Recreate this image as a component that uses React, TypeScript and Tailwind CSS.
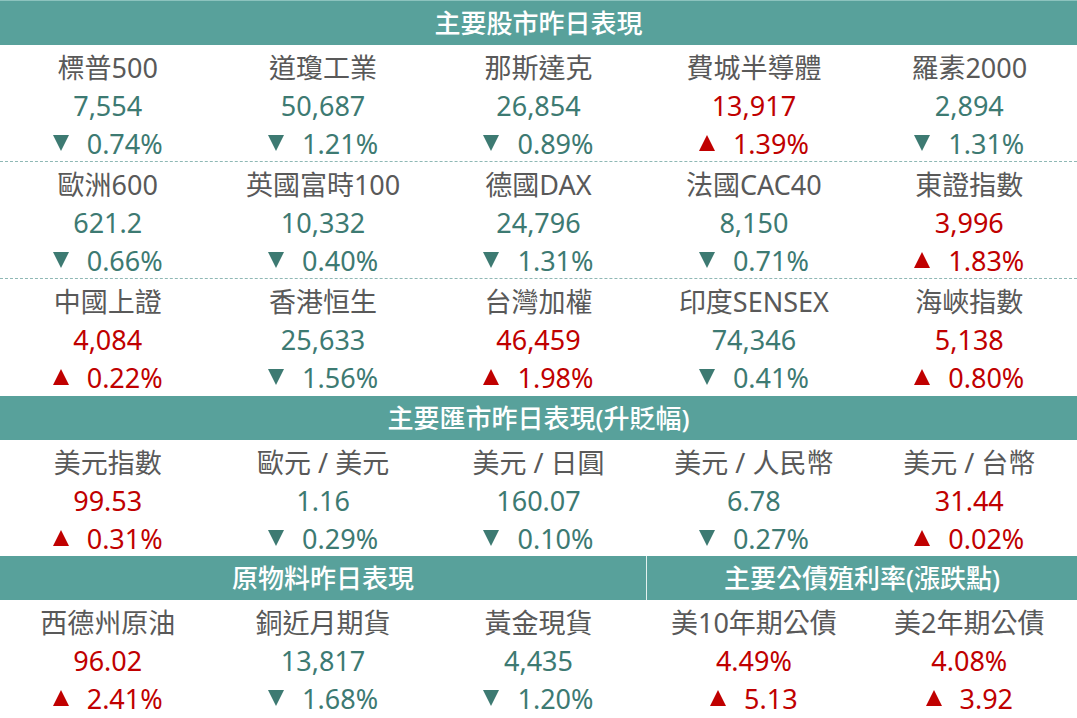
import React from "react";

type Dir = "up" | "down";
type Item = { name: string; value: string; change: string; dir: Dir };

const stocks: Item[][] = [
  [
    { name: "標普500", value: "7,554", change: "0.74%", dir: "down" },
    { name: "道瓊工業", value: "50,687", change: "1.21%", dir: "down" },
    { name: "那斯達克", value: "26,854", change: "0.89%", dir: "down" },
    { name: "費城半導體", value: "13,917", change: "1.39%", dir: "up" },
    { name: "羅素2000", value: "2,894", change: "1.31%", dir: "down" },
  ],
  [
    { name: "歐洲600", value: "621.2", change: "0.66%", dir: "down" },
    { name: "英國富時100", value: "10,332", change: "0.40%", dir: "down" },
    { name: "德國DAX", value: "24,796", change: "1.31%", dir: "down" },
    { name: "法國CAC40", value: "8,150", change: "0.71%", dir: "down" },
    { name: "東證指數", value: "3,996", change: "1.83%", dir: "up" },
  ],
  [
    { name: "中國上證", value: "4,084", change: "0.22%", dir: "up" },
    { name: "香港恒生", value: "25,633", change: "1.56%", dir: "down" },
    { name: "台灣加權", value: "46,459", change: "1.98%", dir: "up" },
    { name: "印度SENSEX", value: "74,346", change: "0.41%", dir: "down" },
    { name: "海峽指數", value: "5,138", change: "0.80%", dir: "up" },
  ],
];

const fx: Item[] = [
  { name: "美元指數", value: "99.53", change: "0.31%", dir: "up" },
  { name: "歐元 / 美元", value: "1.16", change: "0.29%", dir: "down" },
  { name: "美元 / 日圓", value: "160.07", change: "0.10%", dir: "down" },
  { name: "美元 / 人民幣", value: "6.78", change: "0.27%", dir: "down" },
  { name: "美元 / 台幣", value: "31.44", change: "0.02%", dir: "up" },
];

const commodities: Item[] = [
  { name: "西德州原油", value: "96.02", change: "2.41%", dir: "up" },
  { name: "銅近月期貨", value: "13,817", change: "1.68%", dir: "down" },
  { name: "黃金現貨", value: "4,435", change: "1.20%", dir: "down" },
];

const bonds: Item[] = [
  { name: "美10年期公債", value: "4.49%", change: "5.13", dir: "up" },
  { name: "美2年期公債", value: "4.08%", change: "3.92", dir: "up" },
];

const Triangle = ({ dir }: { dir: Dir }) => (
  <svg width="16" height="16" viewBox="0 0 16 16" className="mr-[18px] mb-[2px]">
    {dir === "up" ? (
      <polygon points="8,0 16,16 0,16" fill="#c00000" />
    ) : (
      <polygon points="0,0 16,0 8,16" fill="#3d7a72" />
    )}
  </svg>
);

const Cell = ({ item }: { item: Item }) => {
  const color = item.dir === "up" ? "text-[#c00000]" : "text-[#3d7a72]";
  return (
    <div className="flex flex-col items-center pt-[4px] leading-[38px] text-[27px]">
      <div className="text-[#595959]">{item.name}</div>
      <div className={color}>{item.value}</div>
      <div className={`flex items-center ${color}`}>
        <Triangle dir={item.dir} />
        <span>{item.change}</span>
      </div>
    </div>
  );
};

const Header = ({ title, className = "" }: { title: string; className?: string }) => (
  <div
    className={`h-[44px] bg-[#58a19b] text-white text-[26px] font-medium flex items-center justify-center ${className}`}
  >
    {title}
  </div>
);

export default function App() {
  return (
    <div
      className="w-[1077px] h-[718px] bg-white overflow-hidden"
      style={{ fontFamily: '"Noto Sans", "Noto Sans CJK TC", sans-serif' }}
    >
      <div className="border-t border-[#8cc3be]">
        <Header title="主要股市昨日表現" />
      </div>
      {stocks.map((row, i) => (
        <div
          key={i}
          className={`grid grid-cols-5 h-[117px] ${i < 2 ? "border-b border-dashed border-[#8fb8b5]" : ""}`}
        >
          {row.map((item) => (
            <Cell key={item.name} item={item} />
          ))}
        </div>
      ))}
      <Header title="主要匯市昨日表現(升貶幅)" />
      <div className="grid grid-cols-5 h-[116px]">
        {fx.map((item) => (
          <Cell key={item.name} item={item} />
        ))}
      </div>
      <div className="grid grid-cols-5">
        <Header title="原物料昨日表現" className="col-span-3" />
        <Header title="主要公債殖利率(漲跌點)" className="col-span-2 border-l border-[#e3f1ef]" />
      </div>
      <div className="grid grid-cols-5 h-[117px]">
        {commodities.map((item) => (
          <Cell key={item.name} item={item} />
        ))}
        {bonds.map((item) => (
          <Cell key={item.name} item={item} />
        ))}
      </div>
    </div>
  );
}
